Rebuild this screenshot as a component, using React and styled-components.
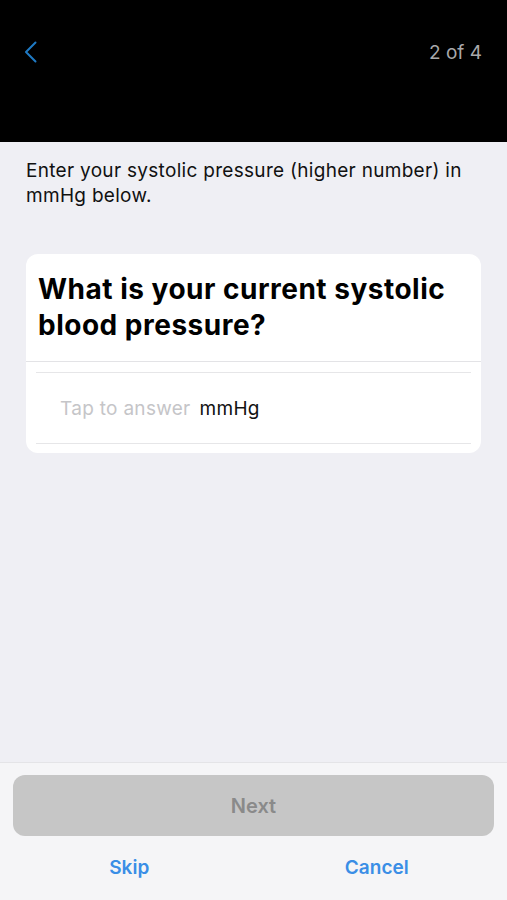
import styled, { createGlobalStyle } from 'styled-components'

const GlobalStyle = createGlobalStyle`
  html, body {
    margin: 0;
    padding: 0;
    background: #efeff4;
    font-family: Inter, "Noto Sans", "Liberation Sans", sans-serif;
    -webkit-font-smoothing: antialiased;
  }
`

const Screen = styled.div`
  width: 507px;
  height: 900px;
  display: flex;
  flex-direction: column;
  background: #efeff4;
  overflow: hidden;
`

const NavBar = styled.header`
  height: 142px;
  flex-shrink: 0;
  background: #000;
  display: flex;
  align-items: flex-start;
  justify-content: space-between;
  padding: 40px 25px 0 24px;
  box-sizing: border-box;
`

const BackButton = styled.button`
  background: none;
  border: none;
  padding: 0;
  width: 18px;
  height: 24px;
  display: flex;
  align-items: center;
  cursor: pointer;
`

const StepCount = styled.span`
  color: #a9a9ab;
  font-size: 19px;
  line-height: 24px;
  margin-top: 1px;
`

const Content = styled.main`
  flex: 1;
  padding: 16px 26px 0;
  display: flex;
  flex-direction: column;
`

const Intro = styled.p`
  margin: 0;
  font-size: 19px;
  line-height: 25px;
  color: #111;
  letter-spacing: 0.3px;
`

const Card = styled.section`
  margin-top: 46px;
  background: #fff;
  border-radius: 12px;
  overflow: hidden;
`

const Question = styled.h2`
  margin: 0;
  padding: 17px 12px 18px;
  font-size: 28px;
  line-height: 36px;
  font-weight: 700;
  color: #000;
  letter-spacing: 0.5px;
  border-bottom: 1px solid #e3e3e6;
`

const AnswerRow = styled.div`
  margin: 10px 10px 0;
  border-top: 1px solid #e6e6e8;
  border-bottom: 1px solid #e6e6e8;
  height: 72px;
  box-sizing: border-box;
  display: flex;
  align-items: center;
  padding-left: 24px;
  gap: 9px;
  font-size: 19px;
  letter-spacing: 0.3px;
`

const Placeholder = styled.span`
  color: #c5c5c8;
`

const Unit = styled.span`
  color: #111;
`

const CardBottom = styled.div`
  height: 9px;
`

const Footer = styled.footer`
  flex-shrink: 0;
  background: #f5f5f7;
  border-top: 1px solid #e4e4e7;
  padding: 12px 13px 0;
  height: 138px;
  box-sizing: border-box;
  display: flex;
  flex-direction: column;
`

const NextButton = styled.button`
  height: 61px;
  width: 100%;
  border: none;
  border-radius: 12px;
  background: #c6c6c6;
  color: #8a8a8a;
  font-family: inherit;
  font-size: 20px;
  font-weight: 600;
`

const LinkRow = styled.div`
  display: grid;
  grid-template-columns: 1fr 1fr;
  margin-top: 18px;
`

const TextButton = styled.button`
  background: none;
  border: none;
  padding: 0;
  font-family: inherit;
  font-size: 19px;
  font-weight: 600;
  color: #3a8ee6;
  justify-self: center;
  line-height: 28px;
  position: relative;
  left: ${(p) => p.$shift || 0}px;
`

export default function App() {
  return (
    <>
      <GlobalStyle />
      <Screen>
        <NavBar>
          <BackButton aria-label="Back">
            <svg width="13" height="22" viewBox="0 0 13 22">
              <path
                d="M11.5 1.5 L2 11 L11.5 20.5"
                fill="none"
                stroke="#1f7ac4"
                strokeWidth="2"
                strokeLinecap="round"
                strokeLinejoin="round"
              />
            </svg>
          </BackButton>
          <StepCount>2 of 4</StepCount>
        </NavBar>
        <Content>
          <Intro>
            Enter your systolic pressure (higher number) in mmHg below.
          </Intro>
          <Card>
            <Question>What is your current systolic blood pressure?</Question>
            <AnswerRow>
              <Placeholder>Tap to answer</Placeholder>
              <Unit>mmHg</Unit>
            </AnswerRow>
            <CardBottom />
          </Card>
        </Content>
        <Footer>
          <NextButton disabled>Next</NextButton>
          <LinkRow>
            <TextButton $shift={-4}>Skip</TextButton>
            <TextButton $shift={3}>Cancel</TextButton>
          </LinkRow>
        </Footer>
      </Screen>
    </>
  )
}
